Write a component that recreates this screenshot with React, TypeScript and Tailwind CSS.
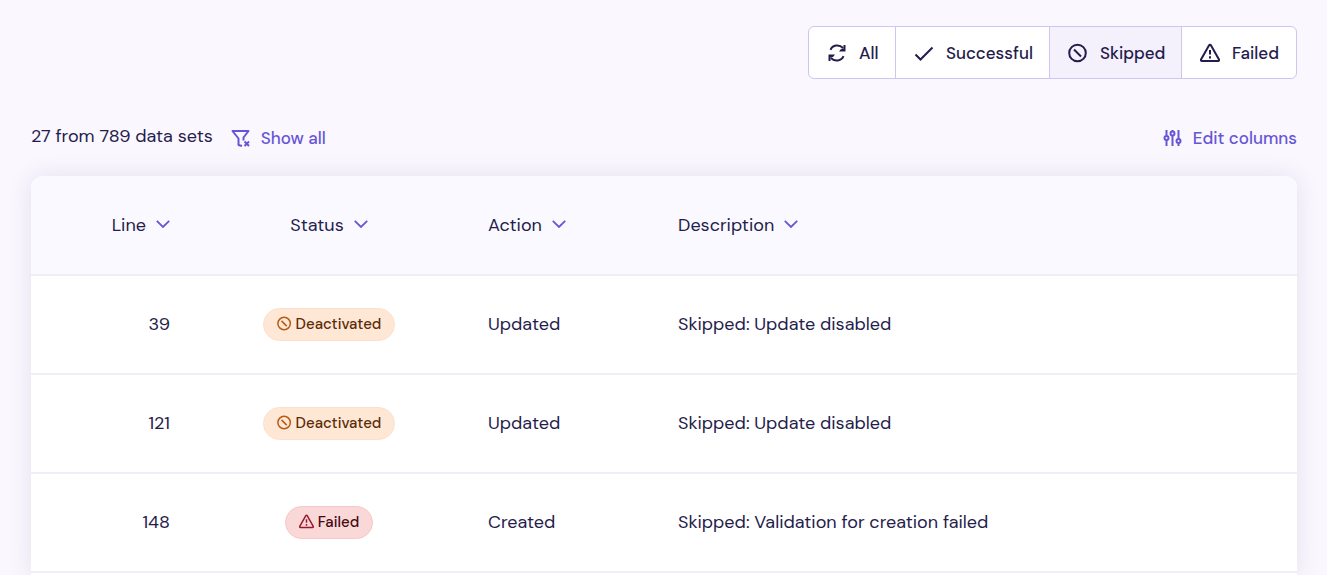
import type { ReactNode, SVGProps } from "react";
import clsx from "clsx";

type IconProps = SVGProps<SVGSVGElement>;

function Icon({ children, ...props }: IconProps) {
  return (
    <svg
      viewBox="0 0 20 20"
      fill="none"
      stroke="currentColor"
      strokeWidth={2}
      strokeLinejoin="round"
      aria-hidden="true"
      {...props}
    >
      {children}
    </svg>
  );
}

const SyncIcon = (props: IconProps) => (
  <Icon {...props}>
    <path d="M3.500 6.800C5.500 1.800 12 1 16.200 5M16.500 13.200C14.500 18.200 8 19 3.800 15" />
    <path d="M18.500 2v6.500H12l2-2.500 2.500-.5V2zM1.500 18v-6.500H8l-2 2.500-2.500.5V18z" fill="currentColor" stroke="none" />
  </Icon>
);

const CheckIcon = (props: IconProps) => (
  <Icon {...props}>
    <path d="M1.500 11.500l5 5L18.500 4.500" strokeLinejoin="miter" />
  </Icon>
);

const SkipIcon = (props: IconProps) => (
  <Icon {...props}>
    <circle cx="9.500" cy="10" r="8.300" />
    <path d="M6 6.500l7 7" />
  </Icon>
);

const WarningIcon = (props: IconProps) => (
  <Icon {...props}>
    <path d="M9.100 2.300a1.050 1.050 0 0 1 1.800 0l8.100 14.200a1 1 0 0 1-.9 1.500H1.900a1 1 0 0 1-.9-1.500z" />
    <path d="M10 7v4.500M10 13.300v2.200" />
  </Icon>
);

const FilterOffIcon = (props: IconProps) => (
  <Icon {...props}>
    <path d="M11 18L7.500 17v-6.500L1.500 3h16l-5 6.500v3" />
    <path d="M13.500 13.500l4.500 4.500M18 13.500L13.500 18" />
  </Icon>
);

const SlidersIcon = (props: IconProps) => (
  <Icon {...props}>
    <path d="M3.500 2v5.500M3.500 12V18M9.500 2v1M9.500 8v10M15.500 2v8.500M15.500 15.500V18" />
    <circle cx="3.500" cy="10" r="2" />
    <circle cx="9.500" cy="5.500" r="2" />
    <circle cx="15.500" cy="13" r="2" />
  </Icon>
);

const ChevronIcon = (props: IconProps) => (
  <svg viewBox="0 0 14 8" fill="none" stroke="currentColor" strokeWidth={1.8} aria-hidden="true" {...props}>
    <path d="M.8.800L7 7 13.200.800" />
  </svg>
);

const filters = [
  { label: "All", Icon: SyncIcon, width: "w-[87px]" },
  { label: "Successful", Icon: CheckIcon, width: "w-[154px]" },
  { label: "Skipped", Icon: SkipIcon, width: "w-[132px]" },
  { label: "Failed", Icon: WarningIcon, width: "w-[114px]" },
];

const rows = [
  { line: 39, status: "Deactivated", action: "Updated", description: "Skipped: Update disabled" },
  { line: 121, status: "Deactivated", action: "Updated", description: "Skipped: Update disabled" },
  { line: 148, status: "Failed", action: "Created", description: "Skipped: Validation for creation failed" },
];

function StatusBadge({ status }: { status: string }) {
  const failed = status === "Failed";
  const BadgeIcon = failed ? WarningIcon : SkipIcon;
  return (
    <span
      className={clsx(
        "inline-flex h-[33px] items-center gap-1 rounded-full border px-[13px] pb-[2px] align-middle text-[15px] font-medium",
        failed ? "border-[#f8c6c6] bg-[#fad8d8] text-[#450a12]" : "border-[#fde0cc] bg-[#ffe7d6] text-[#5c2c06]",
      )}
    >
      <BadgeIcon className={clsx("size-[15px]", failed ? "text-[#99182b]" : "text-[#b85b12]")} />
      {status}
    </span>
  );
}

function SortHeader({ children, className }: { children: ReactNode; className?: string }) {
  return (
    <th scope="col" className={clsx("px-6 font-normal", className)}>
      <button type="button" className="inline-flex items-center gap-[10px]">
        {children}
        <ChevronIcon className="mb-[3px] h-2 w-[14px] text-[#6656d6]" />
      </button>
    </th>
  );
}

export default function App() {
  return (
    <main className="flex min-h-screen flex-col overflow-hidden bg-[#faf7ff] pr-[30px] pl-[31px] pt-[26px] font-['DM_Sans',Inter,sans-serif] text-[17px] leading-6 text-[#251c4b]">
      <div
        role="group"
        aria-label="Filter by result"
        className="flex h-[53px] self-end overflow-hidden rounded-md border border-[#cec6f0] bg-white"
      >
        {filters.map(({ label, Icon: FilterIcon, width }) => (
          <button
            key={label}
            type="button"
            aria-pressed={label === "Skipped"}
            className={clsx(
              "flex items-center gap-3 border-[#cec6f0] pl-[18px] font-medium not-last:border-r",
              width,
              label === "Skipped" && "bg-[#f4f1fd]",
            )}
          >
            <FilterIcon className="size-5 shrink-0" />
            {label}
          </button>
        ))}
      </div>

      <div className="mt-[45px] flex items-center justify-between">
        <div className="flex items-center gap-[18px]">
          <p className="mb-1 text-lg leading-6 tabular-nums">27 from 789 data sets</p>
          <button type="button" className="flex items-center gap-[10px] font-medium text-[#6656d6]">
            <FilterOffIcon className="size-5" />
            Show all
          </button>
        </div>
        <button type="button" className="flex items-center gap-[10px] font-medium text-[#6656d6]">
          <SlidersIcon className="size-5" />
          Edit columns
        </button>
      </div>

      <div className="mt-6 flex-1 rounded-t-xl bg-white shadow-[0_0_24px_rgba(40,30,60,0.1)]">
        <table className="w-full table-fixed text-left text-lg leading-6">
          <colgroup>
            <col className="w-[163px]" />
            <col className="w-[270px]" />
            <col className="w-[190px]" />
            <col />
          </colgroup>
          <thead>
            <tr className="h-[99px] border-b-2 border-[#efedf5] bg-[#faf9ff]">
              <SortHeader className="rounded-tl-xl text-right">Line</SortHeader>
              <SortHeader className="text-center">Status</SortHeader>
              <SortHeader>Action</SortHeader>
              <SortHeader className="rounded-tr-xl">Description</SortHeader>
            </tr>
          </thead>
          <tbody>
            {rows.map(({ line, status, action, description }) => (
              <tr key={line} className="h-[99px] border-b-2 border-[#efedf5]">
                <td className="px-6 pb-[2px] text-right tabular-nums">{line}</td>
                <td className="px-6 text-center">
                  <StatusBadge status={status} />
                </td>
                <td className="px-6 pb-[2px]">{action}</td>
                <td className="px-6 pb-[2px]">{description}</td>
              </tr>
            ))}
          </tbody>
        </table>
      </div>
    </main>
  );
}
